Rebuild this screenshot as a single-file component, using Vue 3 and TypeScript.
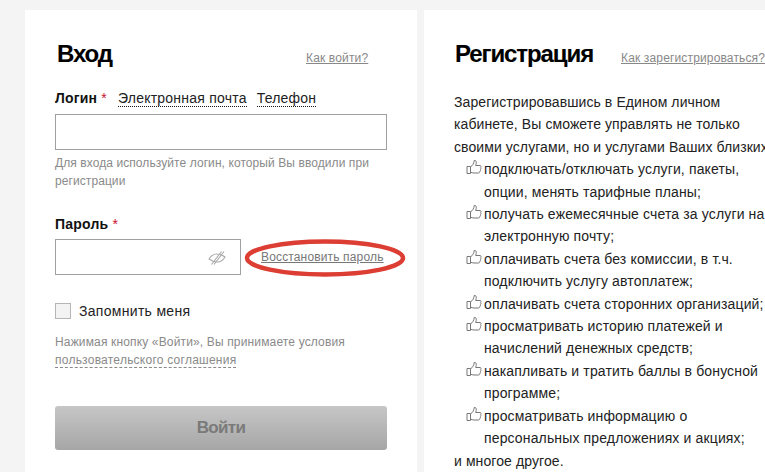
<script setup lang="ts">
interface BenefitLine {
  lines: string[];
}

const benefits: BenefitLine[] = [
  { lines: ['подключать/отключать услуги, пакеты,', 'опции, менять тарифные планы;'] },
  { lines: ['получать ежемесячные счета за услуги на', 'электронную почту;'] },
  { lines: ['оплачивать счета без комиссии, в т.ч.', 'подключить услугу автоплатеж;'] },
  { lines: ['оплачивать счета сторонних организаций;'] },
  { lines: ['просматривать историю платежей и', 'начислений денежных средств;'] },
  { lines: ['накапливать и тратить баллы в бонусной', 'программе;'] },
  { lines: ['просматривать информацию о', 'персональных предложениях и акциях;'] }
];
</script>

<template>
  <div class="page">
    <section class="card login">
      <div class="head">
        <h1>Вход</h1>
        <a class="help">Как войти?</a>
      </div>

      <div class="label-row">
        <span class="label">Логин <i>*</i></span>
        <a class="tab">Электронная почта</a>
        <a class="tab">Телефон</a>
      </div>
      <div class="field"></div>
      <p class="hint">Для входа используйте логин, который Вы вводили при регистрации</p>

      <div class="label pass-label">Пароль <i>*</i></div>
      <div class="pass-row">
        <div class="field pass">
          <svg class="eye" width="18" height="14" viewBox="0 0 18 14" fill="none" stroke="#aaa" stroke-width="1.1">
            <path d="M1 8C3 4.800 5.500 3 8.500 3 11.500 3 14.500 4 17 6 15 9.200 12.500 11 9.500 11 6.500 11 3.500 10 1 8Z" />
            <path d="M3.500 13.500 13.500.5M6 13.500 16 .5" />
          </svg>
        </div>
        <a class="restore">Восстановить пароль</a>
        <svg class="circle" width="164" height="42" viewBox="0 0 164 42" fill="none">
          <ellipse cx="82" cy="21" rx="78" ry="16.5" stroke="#dc3e33" stroke-width="4.500" />
        </svg>
      </div>

      <div class="remember">
        <span class="check"></span>
        <span>Запомнить меня</span>
      </div>

      <p class="terms">
        Нажимая кнопку «Войти», Вы принимаете условия<br />
        <a>пользовательского соглашения</a>
      </p>

      <button class="submit" type="button">Войти</button>
    </section>

    <section class="card register">
      <div class="head">
        <h1>Регистрация</h1>
        <a class="help">Как зарегистрироваться?</a>
      </div>
      <p class="intro">
        Зарегистрировавшись в Едином личном<br />
        кабинете, Вы сможете управлять не только<br />
        своими услугами, но и услугами Ваших близких
      </p>
      <ul class="benefits">
        <li v-for="item in benefits" :key="item.lines[0]">
          <svg class="thumb" width="16" height="16" viewBox="0 0 16 16" fill="none" stroke="#777" stroke-width="1">
            <path d="M1 7.500h3.500v7H1zM4.500 8C6.500 6.500 8 4.500 8.200 1.500 9.800 1 10.600 2.600 10.200 4.500L9.700 6.500H14c1.200 0 1.300 1.400.5 1.800.8.500.7 1.700-.2 2 .6.600.3 1.600-.5 1.800.3.900-.2 1.900-1.300 1.900H8c-1.400 0-2.300-.5-3.500-.8" />
          </svg>
          <span v-for="line in item.lines" :key="line" class="line">{{ line }}</span>
        </li>
      </ul>
      <p class="outro">и многое другое.</p>
    </section>
  </div>
</template>

<style>
html,
body {
  margin: 0;
  background: #f4f4f4;
}
</style>

<style scoped>
.page {
  display: flex;
  gap: 7px;
  width: 765px;
  height: 472px;
  overflow: hidden;
  padding: 10px 0 0 25px;
  box-sizing: border-box;
  font-family: "Liberation Sans", Arial, sans-serif;
  color: #111;
}

.card {
  flex: none;
  background: #fff;
  height: 462px;
  box-sizing: border-box;
  padding-top: 30px;
}

.login {
  width: 392px;
  padding-left: 30px;
  padding-right: 30px;
}

.register {
  width: 341px;
  padding-left: 30px;
  white-space: nowrap;
}

.head {
  display: flex;
  align-items: baseline;
  height: 34px;
}

h1 {
  flex: none;
  margin: 0;
  font-size: 24px;
  line-height: 28px;
  font-weight: 700;
  letter-spacing: -1.1px;
  color: #000;
  -webkit-text-stroke: 0.1px #000;
}

.login h1 {
  margin-left: 2px;
  width: 249px;
}

.register h1 {
  margin-left: 1px;
  width: 166px;
}

.help {
  flex: none;
  font-size: 12px;
  letter-spacing: 0.15px;
  color: #888;
  text-decoration: underline;
}

.label-row {
  display: flex;
  align-items: baseline;
  margin-top: 16px;
  height: 24px;
  font-size: 14px;
}

.label {
  font-size: 14px;
  font-weight: 700;
  letter-spacing: 0.2px;
  color: #111;
}

.label i {
  font-style: normal;
  font-weight: 400;
  color: #c8102e;
}

.label-row .label {
  width: 63px;
}

.tab {
  margin-right: 10px;
  letter-spacing: 0.22px;
  color: #222;
  border-bottom: 1px dotted #111;
  line-height: 15px;
}

.field {
  width: 332px;
  height: 36px;
  box-sizing: border-box;
  border: 1px solid #a0a0a0;
  background: #fff;
}

.hint {
  margin: 4px 0 0;
  font-size: 12px;
  line-height: 18px;
  letter-spacing: 0.08px;
  color: #8a8a8a;
  width: 320px;
}

.pass-label {
  margin-top: 24px;
  height: 25px;
  line-height: 20px;
}

.pass-row {
  position: relative;
  display: flex;
  align-items: center;
  height: 36px;
}

.pass {
  position: relative;
  width: 186px;
  flex: none;
}

.eye {
  position: absolute;
  left: 152px;
  top: 11px;
}

.restore {
  margin-left: 20px;
  font-size: 12px;
  color: #777;
  text-decoration: underline;
  letter-spacing: 0.15px;
}

.circle {
  position: absolute;
  left: 188px;
  top: -2px;
}

.remember {
  display: flex;
  align-items: center;
  gap: 8px;
  margin-top: 28px;
  height: 16px;
  font-size: 14px;
  letter-spacing: 0.3px;
  color: #222;
}

.check {
  width: 16px;
  height: 16px;
  box-sizing: border-box;
  border: 1px solid #b5b5b5;
  background: #f3f3f3;
}

.terms {
  margin: 14px 0 0;
  font-size: 12px;
  line-height: 18px;
  letter-spacing: 0.15px;
  color: #8a8a8a;
}

.terms a {
  color: #8a8a8a;
  border-bottom: 1px dashed #8a8a8a;
  letter-spacing: 0.24px;
}

.submit {
  display: block;
  width: 332px;
  height: 44px;
  margin-top: 37px;
  padding: 0;
  border: 0;
  border-radius: 3px;
  background: linear-gradient(#c6c6c6, #a6a6a6);
  color: #7a7a7a;
  font-family: inherit;
  font-size: 17px;
  font-weight: 700;
  letter-spacing: -0.7px;
}

.intro,
.outro {
  margin: 0;
  font-size: 14px;
  line-height: 22.4px;
  letter-spacing: 0.09px;
  color: #222;
}

.intro {
  margin-top: 17px;
}

.benefits {
  list-style: none;
  margin: 0;
  padding: 0 0 0 30px;
  font-size: 14px;
  line-height: 22.4px;
  letter-spacing: 0.14px;
  color: #222;
}

.benefits li {
  position: relative;
}

.line {
  display: block;
  white-space: nowrap;
}

.thumb {
  position: absolute;
  left: -18px;
  top: 1px;
}
</style>
